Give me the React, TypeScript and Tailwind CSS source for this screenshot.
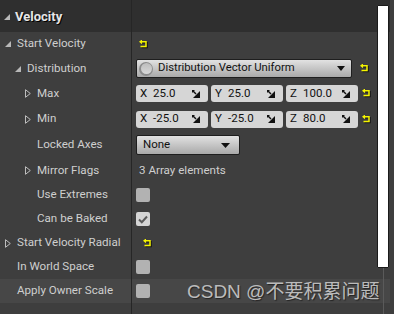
import React from "react";

const font = { fontFamily: "Roboto, 'Noto Sans', 'Liberation Sans', sans-serif" };

function Reset() {
  return (
    <svg width="10" height="9" viewBox="0 0 10 9" className="block">
      <g transform="translate(1,1)" stroke="#151515" fill="none" strokeWidth="1.5">
        <path d="M2.5 1.8 H7 V6.5 H1.5" />
      </g>
      <g stroke="#f5f500" fill="none" strokeWidth="1.5">
        <path d="M2.5 1.8 H7 V6.5 H1.5" />
      </g>
      <path d="M0 1.8 L3 -0.6 V4.2 Z" fill="#f5f500" />
    </svg>
  );
}

function Tri({ down }: { down?: boolean }) {
  if (down) {
    return (
      <svg width="6" height="6" viewBox="0 0 6 6" className="block">
        <path d="M6 0 V6 H0 Z" fill="#b8b8b8" />
      </svg>
    );
  }
  return (
    <svg width="6" height="9" viewBox="0 0 6 9" className="block">
      <path d="M0.5 0.7 L5.3 4.5 L0.5 8.3 Z" fill="none" stroke="#bdbdbd" strokeWidth="1" />
    </svg>
  );
}

function Spin() {
  return (
    <svg width="8" height="8" viewBox="0 0 8 8" className="block">
      <path d="M0 0 H3 L0 3 Z" fill="#111" />
      <path d="M8 1 V8 H1 Z" fill="#111" />
      <path d="M0.5 0.5 L4 4" stroke="#111" strokeWidth="1.4" />
    </svg>
  );
}

function VecField({ axis, value }: { axis: string; value: string }) {
  return (
    <div className="flex h-[17px] w-[72px] items-center rounded-[3px] bg-[#d6d6d6] pl-[4px] pr-[8px] text-[11.5px] text-[#111]">
      <span className="w-[13px]">{axis}</span>
      <span className="flex-1">{value}</span>
      <Spin />
    </div>
  );
}

function Check({ checked }: { checked?: boolean }) {
  return (
    <div
      className={
        "flex h-[14px] w-[14px] items-center justify-center rounded-[2px] " +
        (checked ? "bg-[#d4d4d4]" : "bg-[#b2b2b2]")
      }
    >
      {checked && (
        <svg width="10" height="9" viewBox="0 0 10 9">
          <path d="M1 4.5 L3.8 7.2 L9 1.5" fill="none" stroke="#5a5a5a" strokeWidth="2" />
        </svg>
      )}
    </div>
  );
}

function Row({
  h,
  indent,
  tri,
  label,
  children,
  highlight,
}: {
  h: string;
  indent: string;
  tri?: "down" | "open";
  label: string;
  children?: React.ReactNode;
  highlight?: boolean;
}) {
  return (
    <div className={"flex w-[390px] " + h + (highlight ? " bg-[#474747]" : "")}>
      <div className={"flex w-[132px] items-center border-r border-[#262626] " + indent}>
        <div className="flex w-[12px] items-center">
          {tri === "down" && <Tri down />}
          {tri === "open" && <Tri />}
        </div>
        <span className="text-[11.6px] text-[#cfcfcf]">{label}</span>
      </div>
      <div className="flex flex-1 items-center pl-[4px]">{children}</div>
    </div>
  );
}

export default function App() {
  return (
    <div className="relative h-[314px] w-[394px] overflow-hidden bg-[#3e3e3e]" style={font}>
      {/* header */}
      <div className="flex h-[32px] w-[390px] bg-[#2f2f2f]">
        <div className="flex w-[132px] items-center border-r border-[#262626] pl-[4px] pt-[2px]">
          <div className="mr-[5px]">
            <Tri down />
          </div>
          <span
            className="text-[13px] font-bold text-[#e6e6e6]"
            style={{ textShadow: "1px 1px 0 #000" }}
          >
            Velocity
          </span>
        </div>
      </div>

      <Row h="h-[24px]" indent="pl-[5px]" tri="down" label="Start Velocity">
        <div className="pl-[3px]">
          <Reset />
        </div>
      </Row>
      <Row h="h-[25px]" indent="pl-[15px]" tri="down" label="Distribution">
        <div className="flex h-[19px] w-[216px] items-center rounded-[2px] border border-[#1e1e1e] bg-gradient-to-b from-[#e2e2e2] to-[#a9a9a9] pl-[2px] pr-[6px]">
          <div className="flex h-[14px] w-[14px] items-center justify-center rounded-full bg-[#8c8c8c]">
            <div className="h-[11px] w-[11px] rounded-full bg-gradient-to-b from-[#bdbdbd] to-[#d8d8d8]" />
          </div>
          <span className="ml-[5px] flex-1 text-[11.3px] text-[#111]">Distribution Vector Uniform</span>
          <svg width="8" height="5" viewBox="0 0 8 5">
            <path d="M0 0 H8 L4 5 Z" fill="#111" />
          </svg>
        </div>
        <div className="ml-[8px]">
          <Reset />
        </div>
      </Row>
      <Row h="h-[25px]" indent="pl-[25px]" tri="open" label="Max">
        <div className="flex gap-[3px]">
          <VecField axis="X" value="25.0" />
          <VecField axis="Y" value="25.0" />
          <VecField axis="Z" value="100.0" />
        </div>
        <div className="ml-[4px]">
          <Reset />
        </div>
      </Row>
      <Row h="h-[26px]" indent="pl-[25px]" tri="open" label="Min">
        <div className="flex gap-[3px]">
          <VecField axis="X" value="-25.0" />
          <VecField axis="Y" value="-25.0" />
          <VecField axis="Z" value="80.0" />
        </div>
        <div className="ml-[4px]">
          <Reset />
        </div>
      </Row>
      <Row h="h-[26px]" indent="pl-[25px]" label="Locked Axes">
        <div className="flex h-[20px] w-[104px] items-center rounded-[2px] border border-[#1e1e1e] bg-gradient-to-b from-[#e2e2e2] to-[#a9a9a9] pl-[6px] pr-[9px]">
          <span className="flex-1 text-[11.5px] text-[#111]">None</span>
          <svg width="9" height="5" viewBox="0 0 9 5">
            <path d="M0 0 H9 L4.5 5 Z" fill="#111" />
          </svg>
        </div>
      </Row>
      <Row h="h-[25px]" indent="pl-[25px]" tri="open" label="Mirror Flags">
        <span className="pl-[3px] text-[11.6px] text-[#cfcfcf]">3 Array elements</span>
      </Row>
      <Row h="h-[24px]" indent="pl-[25px]" label="Use Extremes">
        <Check />
      </Row>
      <Row h="h-[24px]" indent="pl-[25px]" label="Can be Baked">
        <Check checked />
      </Row>
      <Row h="h-[24px]" indent="pl-[5px]" tri="open" label="Start Velocity Radial">
        <div className="pl-[7px]">
          <Reset />
        </div>
      </Row>
      <Row h="h-[24px]" indent="pl-[5px]" label="In World Space">
        <Check />
      </Row>
      <Row h="h-[24px]" indent="pl-[5px]" label="Apply Owner Scale" highlight>
        <Check />
      </Row>
      <div className="flex h-[11px] w-[390px]">
        <div className="w-[132px] border-r border-[#262626]" />
      </div>

      {/* scrollbar */}
      <div className="absolute left-[377px] top-[5px] h-[263px] w-[12px] rounded-[1px] border border-[#1a1a1a] bg-white" />
      <div className="absolute left-[383px] top-[268px] h-[46px] w-[1px] bg-[#5a5a5a]" />

      {/* watermark */}
      <div
        className="absolute left-[187px] top-[280px] text-[19px] leading-[24px] text-[#d0d0d0]"
        style={{
          fontFamily: "'Liberation Sans', 'Noto Sans CJK SC', sans-serif",
          textShadow: "1px 1px 1px rgba(0,0,0,0.6)",
          opacity: 0.85,
        }}
      >
        CSDN @不要积累问题
      </div>
    </div>
  );
}
